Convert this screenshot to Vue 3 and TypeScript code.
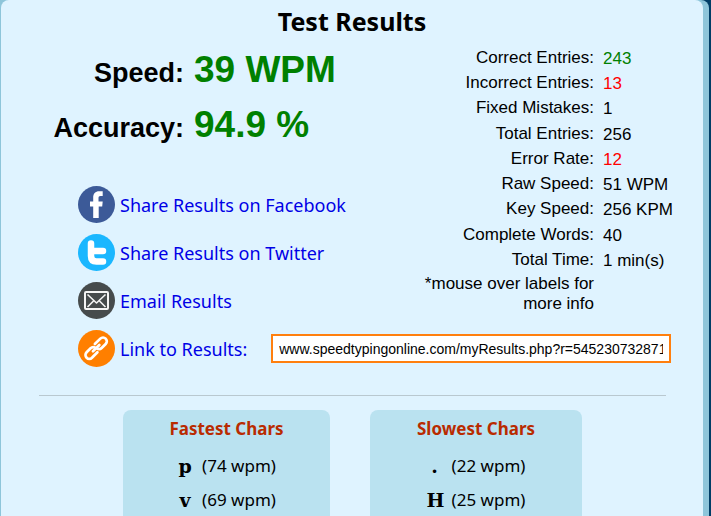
<script setup lang="ts">
interface Stat { label: string; value: string; tone?: 'good' | 'bad' }
interface CharSpeed { char: string; wpm: number }

const stats: Stat[] = [
  { label: 'Correct Entries:', value: '243', tone: 'good' },
  { label: 'Incorrect Entries:', value: '13', tone: 'bad' },
  { label: 'Fixed Mistakes:', value: '1' },
  { label: 'Total Entries:', value: '256' },
  { label: 'Error Rate:', value: '12', tone: 'bad' },
  { label: 'Raw Speed:', value: '51 WPM' },
  { label: 'Key Speed:', value: '256 KPM' },
  { label: 'Complete Words:', value: '40' },
  { label: 'Total Time:', value: '1 min(s)' },
]

const charGroups: { title: string; rows: CharSpeed[] }[] = [
  { title: 'Fastest Chars', rows: [{ char: 'p', wpm: 74 }, { char: 'v', wpm: 69 }] },
  { title: 'Slowest Chars', rows: [{ char: '.', wpm: 22 }, { char: 'H', wpm: 25 }] },
]

const link = 'www.speedtypingonline.com/myResults.php?r=545230732871'
</script>

<template>
  <div class="frame">
    <main class="panel">
      <h1>Test Results</h1>
      <div class="top">
        <div class="main-col">
          <dl class="scores">
            <dt>Speed:</dt>
            <dd>39 WPM</dd>
            <dt>Accuracy:</dt>
            <dd>94.9 %</dd>
          </dl>
          <div class="share">
            <a href="#facebook">
              <svg viewBox="0 0 37 37" aria-hidden="true">
                <circle cx="18.500" cy="18.500" r="18.500" fill="#3c5a98" />
                <path d="M15.200 32V20.500H12v-5h3.200v-3.700c0-4.300 2-6.500 6.100-6.500h3.400v4.700h-2.200c-1.500 0-2 .7-2 2.200v3.300h4.200l-.5 5h-3.500V32z" fill="#fff" />
              </svg>
              <span>Share Results on Facebook</span>
            </a>
            <a href="#twitter">
              <svg viewBox="0 0 37 37" aria-hidden="true">
                <circle cx="18.500" cy="18.500" r="18.500" fill="#1ab7ff" />
                <path d="M13 9.500v12.500q0 5.500 5.500 5.500H25M13 17h12" fill="none" stroke="#fff" stroke-width="6.500" stroke-linecap="round" stroke-linejoin="round" />
              </svg>
              <span>Share Results on Twitter</span>
            </a>
            <a href="#email">
              <svg viewBox="0 0 37 37" aria-hidden="true">
                <circle cx="18.500" cy="18.500" r="18.500" fill="#464b4c" />
                <g fill="none" stroke="#f4f4f4" stroke-linejoin="round">
                  <rect x="7" y="10" width="23" height="17" rx="1" stroke-width="2" />
                  <path d="M9.500 12.500l9 8.500 9-8.500M9.500 25l6-6M27.500 25l-6-6" stroke-width="1.600" />
                </g>
              </svg>
              <span>Email Results</span>
            </a>
          </div>
        </div>
        <div class="stats-col">
          <dl class="stats">
            <template v-for="s in stats" :key="s.label">
              <dt>{{ s.label }}</dt>
              <dd :class="s.tone">{{ s.value }}</dd>
            </template>
          </dl>
          <p class="hint">*mouse over labels for more info</p>
        </div>
      </div>
      <div class="link-row">
        <label for="result-link">
          <svg viewBox="0 0 37 37" aria-hidden="true">
            <circle cx="18.500" cy="18.500" r="18.500" fill="#ff7f00" />
            <g fill="none" stroke="#fff" stroke-width="2.700" stroke-linecap="round" transform="rotate(-45 18.500 18.500)">
              <path d="M16.500 21.800H8.800a3.800 3.800 0 0 1 0-7.600h5.700a3.800 3.800 0 0 1 3.600 2.800" />
              <path d="M20.500 14.200h7.700a3.800 3.800 0 0 1 0 7.600h-5.700a3.800 3.800 0 0 1-3.600-2.800" />
              <path d="M14 18h9" />
            </g>
          </svg>
          <span>Link to Results:</span>
        </label>
        <input id="result-link" type="text" :value="link" readonly />
      </div>
      <hr />
      <div class="cards">
        <section v-for="g in charGroups" :key="g.title" class="card">
          <h2>{{ g.title }}</h2>
          <ul>
            <li v-for="r in g.rows" :key="r.char">
              <b>{{ r.char }}</b>
              <span>({{ r.wpm }} wpm)</span>
            </li>
          </ul>
        </section>
      </div>
    </main>
  </div>
</template>

<style>
body {
  background: #003d66;
  overflow: hidden;
}
</style>

<style scoped>
.frame {
  margin-right: 2px;
  padding: 0 6px 0 1px;
  background: #8ec5da;
  border-top-right-radius: 8px;
  font-family: "Noto Sans", "Open Sans", sans-serif;
  color: #000;
}
.panel {
  min-height: 100vh;
  box-sizing: border-box;
  padding: 3px 32px 0 38px;
  background: #dff3ff;
  border-radius: 8px 8px 0 0;
}
h1 {
  margin: 0 -32px 0 -38px;
  font-size: 25px;
  line-height: 36px;
  text-align: center;
}
.top {
  display: flex;
  justify-content: space-between;
}
.scores {
  display: grid;
  grid-template-columns: 145px auto;
  column-gap: 10px;
  row-gap: 7px;
  align-items: baseline;
  margin: 7px 0 0;
  font-family: "Liberation Sans", Arial, sans-serif;
  font-weight: bold;
  line-height: 48px;
}
.scores dt {
  font-size: 27px;
  line-height: 36px;
  text-align: right;
}
.scores dd {
  margin: 0;
  font-size: 37px;
  color: #008000;
}
.share {
  display: grid;
  justify-items: start;
  gap: 11px;
  margin: 37px 0 0 39px;
}
.share a,
.link-row label {
  display: flex;
  align-items: center;
  gap: 5px;
  font-size: 18px;
  line-height: 24px;
  color: #0000e6;
  text-decoration: none;
  white-space: nowrap;
}
svg {
  flex: none;
  width: 37px;
  height: 37px;
}
.stats-col {
  margin-top: 6px;
  font-family: "Liberation Sans", Arial, sans-serif;
  font-size: 17px;
}
.stats {
  display: grid;
  grid-template-columns: 175px 68px;
  grid-template-rows: repeat(9, 1fr);
  column-gap: 9px;
  min-height: 227px;
  margin: 0;
  line-height: 25px;
}
.stats dt {
  text-align: right;
}
.stats dd {
  margin: 0;
  padding-top: 2px;
  line-height: 23px;
  white-space: nowrap;
}
.good {
  color: #008000;
}
.bad {
  color: #f00;
}
.hint {
  width: 175px;
  margin: 2px 0 0;
  line-height: 20px;
  text-align: right;
}
.link-row {
  display: flex;
  align-items: center;
  gap: 24px;
  margin: 11px 0 0 39px;
}
.link-row input {
  flex: 1;
  min-width: 0;
  height: 29px;
  box-sizing: border-box;
  padding: 0 6px;
  border: 2px solid #ff7f0e;
  border-radius: 0;
  background: #fff;
  color: #000;
  font-family: "Liberation Sans", Arial, sans-serif;
  font-size: 14px;
}
hr {
  height: 1px;
  margin: 28px 5px 14px 0;
  border: 0;
  background: #b9c8d0;
}
.cards {
  display: flex;
  justify-content: center;
  gap: 40px;
  padding-right: 5px;
}
.card {
  width: 212px;
  min-height: 120px;
  box-sizing: border-box;
  padding-top: 6px;
  border-radius: 8px;
  background: #bae2f0;
}
.card:first-child {
  width: 207px;
}
h2 {
  margin: 0 0 7px;
  font-size: 17px;
  line-height: 26px;
  text-align: center;
  color: #b92b00;
}
ul {
  margin: 0;
  padding: 0;
  list-style: none;
}
li {
  display: flex;
  justify-content: center;
  gap: 9px;
  font-size: 17px;
  line-height: 34px;
}
li b {
  width: 16px;
  font-family: "DejaVu Serif", serif;
  font-size: 19px;
  text-align: center;
}
</style>
